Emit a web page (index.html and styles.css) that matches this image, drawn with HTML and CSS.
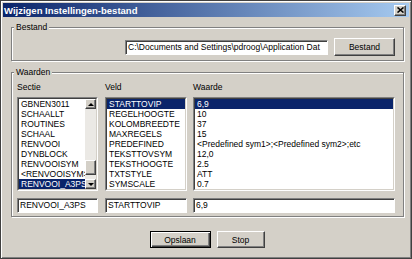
FILE: index.html
```html
<!DOCTYPE html>
<html lang="nl">
<head>
    <meta charset="UTF-8">
    <title>Wijzigen Instellingen-bestand</title>
    <link rel="stylesheet" href="styles.css">
</head>
<body>
    <div class="window">
        <div class="titlebar">
            <span class="title">Wijzigen Instellingen-bestand</span>
            <span class="close-btn">
                <svg width="7" height="6" viewBox="0 0 7 6"><path d="M0.5 0.5 L6.5 5.5 M6.5 0.5 L0.5 5.5" stroke="#000" stroke-width="1.6"/></svg>
            </span>
        </div>

        <div class="content">
            <fieldset class="group group-file">
                <legend>Bestand</legend>
                <div class="file-row">
                    <div class="field file-path">C:\Documents and Settings\pdroog\Application Dat</div>
                    <button class="btn btn-browse">Bestand</button>
                </div>
            </fieldset>

            <fieldset class="group group-values">
                <legend>Waarden</legend>
                <div class="columns">
                    <div class="column col-section">
                        <div class="col-label">Sectie</div>
                        <div class="listbox">
                            <div class="listbox-inner">
                                <ul class="items">
                                    <li>GBNEN3011</li>
                                    <li>SCHAALLT</li>
                                    <li>ROUTINES</li>
                                    <li>SCHAAL</li>
                                    <li>RENVOOI</li>
                                    <li>DYNBLOCK</li>
                                    <li>RENVOOISYM</li>
                                    <li>&lt;RENVOOISYM&gt;</li>
                                    <li class="selected">RENVOOI_A3PS</li>
                                </ul>
                                <div class="scrollbar">
                                    <div class="sb-btn"><span class="arrow-up"></span></div>
                                    <div class="sb-track"><div class="sb-thumb"></div></div>
                                    <div class="sb-btn"><span class="arrow-down"></span></div>
                                </div>
                            </div>
                        </div>
                        <div class="field">RENVOOI_A3PS</div>
                    </div>

                    <div class="column col-field">
                        <div class="col-label">Veld</div>
                        <div class="listbox">
                            <div class="listbox-inner">
                                <ul class="items">
                                    <li class="selected">STARTTOVIP</li>
                                    <li>REGELHOOGTE</li>
                                    <li>KOLOMBREEDTE</li>
                                    <li>MAXREGELS</li>
                                    <li>PREDEFINED</li>
                                    <li>TEKSTTOVSYM</li>
                                    <li>TEKSTHOOGTE</li>
                                    <li>TXTSTYLE</li>
                                    <li>SYMSCALE</li>
                                </ul>
                            </div>
                        </div>
                        <div class="field">STARTTOVIP</div>
                    </div>

                    <div class="column col-value">
                        <div class="col-label">Waarde</div>
                        <div class="listbox">
                            <div class="listbox-inner">
                                <ul class="items">
                                    <li class="selected">6,9</li>
                                    <li>10</li>
                                    <li>37</li>
                                    <li>15</li>
                                    <li>&lt;Predefined sym1&gt;;&lt;Predefined sym2&gt;;etc</li>
                                    <li>12,0</li>
                                    <li>2.5</li>
                                    <li>ATT</li>
                                    <li>0.7</li>
                                </ul>
                            </div>
                        </div>
                        <div class="field">6,9</div>
                    </div>
                </div>
            </fieldset>

            <div class="actions">
                <button class="btn btn-default btn-save">Opslaan</button>
                <button class="btn btn-stop">Stop</button>
            </div>
        </div>
    </div>
</body>
</html>
```

FILE: styles.css
```css
body {
    margin: 0;
    font-family: "Liberation Sans", Arial, sans-serif;
    font-size: 8.5px;
    color: #000;
    background: #d4d0c8;
}
.window {
    width: 412px;
    height: 259px;
    box-sizing: border-box;
    border: 1px solid #404040;
    box-shadow: inset 1px 1px #fff, inset -1px -1px #808080;
    padding: 2px;
    background: #d4d0c8;
}
.titlebar {
    display: flex;
    align-items: center;
    justify-content: space-between;
    height: 14px;
    padding: 0 3px 0 1px;
    background: linear-gradient(to right, #0a246a, #a6caf0);
    color: #fff;
    font-weight: bold;
    font-size: 9.5px;
}
.close-btn {
    display: flex;
    align-items: center;
    justify-content: center;
    width: 12px;
    height: 11px;
    box-sizing: border-box;
    background: #d4d0c8;
    border: 1px solid;
    border-color: #fff #404040 #404040 #fff;
    box-shadow: inset -1px -1px #808080;
}
.content {
    padding: 5px 6px 0 8px;
}
.group {
    margin: 0;
    width: 393px;
    box-sizing: border-box;
    border: 1px solid #808080;
    box-shadow: inset 1px 1px #fff, 1px 1px #fff;
}
.group legend {
    margin-left: -3px;
    padding: 0 2px;
    line-height: 10px;
    background: #d4d0c8;
}
.group-file {
    padding: 6px 8px 4px 5px;
}
.file-row {
    display: flex;
    justify-content: flex-end;
    align-items: center;
    gap: 6px;
}
.field {
    height: 15px;
    box-sizing: border-box;
    border: 1px solid;
    border-color: #808080 #fff #fff #808080;
    box-shadow: inset 1px 1px #404040;
    background: #fff;
    padding: 0 2px;
    line-height: 12px;
    white-space: nowrap;
    overflow: hidden;
}
.file-path {
    width: 203px;
}
.btn {
    font: inherit;
    color: #000;
    height: 18px;
    box-sizing: border-box;
    padding: 0;
    background: #d4d0c8;
    border: 1px solid;
    border-color: #fff #404040 #404040 #fff;
    box-shadow: inset -1px -1px #808080;
}
.btn-browse {
    width: 61px;
}
.group-values {
    margin-top: 6px;
    padding: 5px 8px 3px 5px;
}
.columns {
    display: flex;
}
.column {
    display: flex;
    flex-direction: column;
}
.col-section {
    width: 81px;
    margin-right: 7px;
}
.col-field {
    width: 82px;
    margin-right: 6px;
}
.col-value {
    width: 202px;
}
.col-label {
    line-height: 10px;
    margin-bottom: 5px;
}
.listbox {
    height: 94px;
    box-sizing: border-box;
    border: 1px solid;
    border-color: #808080 #fff #fff #808080;
    background: #fff;
    margin-bottom: 7px;
}
.listbox-inner {
    display: flex;
    height: 100%;
    box-sizing: border-box;
    border: 1px solid;
    border-color: #404040 #d4d0c8 #d4d0c8 #404040;
}
.items {
    flex: 1;
    min-width: 0;
    margin: 0;
    padding: 0;
    list-style: none;
    overflow: hidden;
}
.items li {
    height: 10px;
    line-height: 10px;
    padding-left: 2px;
    white-space: nowrap;
}
.items li.selected {
    background: #0a246a;
    color: #fff;
}
.scrollbar {
    display: flex;
    flex-direction: column;
    width: 11px;
}
.sb-btn, .sb-thumb {
    box-sizing: border-box;
    background: #d4d0c8;
    border: 1px solid;
    border-color: #fff #404040 #404040 #fff;
    box-shadow: inset -1px -1px #808080;
}
.sb-btn {
    display: flex;
    align-items: center;
    justify-content: center;
    height: 10px;
}
.arrow-up, .arrow-down {
    width: 0;
    height: 0;
    border-left: 3px solid transparent;
    border-right: 3px solid transparent;
}
.arrow-up {
    border-bottom: 3px solid #000;
}
.arrow-down {
    border-top: 3px solid #000;
}
.sb-track {
    flex: 1;
    display: flex;
    flex-direction: column;
    background: #ebe9e5;
}
.sb-thumb {
    height: 15px;
    margin-top: auto;
    margin-bottom: 4px;
}
.actions {
    display: flex;
    justify-content: center;
    gap: 6px;
    margin-top: 14px;
}
.btn-save {
    width: 61px;
    height: 17px;
}
.btn-stop {
    width: 48px;
    height: 17px;
}
.btn-default {
    border-color: #000;
    box-shadow: inset 1px 1px #fff, inset -1px -1px #404040, inset -2px -2px #808080;
}
```
